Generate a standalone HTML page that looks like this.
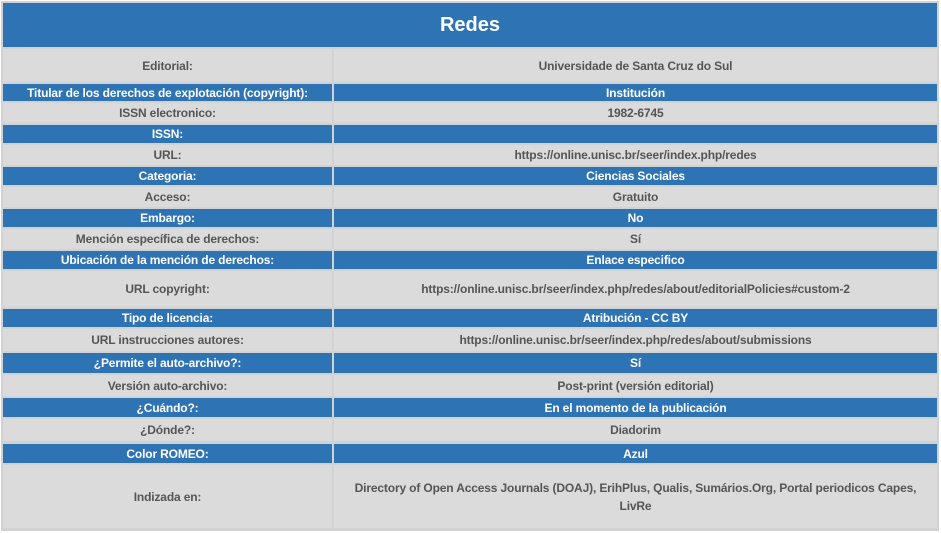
<!DOCTYPE html>
<html><head><meta charset="utf-8"><style>
body{margin:0;width:941px;height:533px;background:#fff;position:relative;font-family:"Liberation Sans",Arial,sans-serif;overflow:hidden}
#t{position:absolute;left:1px;top:1px;width:938px;height:530px;background:#d2d2d2}
.c{position:absolute;display:flex;align-items:center;justify-content:center;text-align:center;font-size:12px;font-weight:bold;color:#555;background:#dbdbdb;line-height:18px;letter-spacing:-0.15px}
.b{background:#2e74b5;color:#fff}
.l{left:3px;width:329px}
.r{left:334px;width:603px}
</style></head><body>
<div id="t"></div>
<div class="c b" style="left:3px;top:3px;width:934px;height:44px;font-size:20px;letter-spacing:0">Redes</div>
<div id="rows"></div>
<script>
var R=[
["Editorial:","Universidade de Santa Cruz do Sul",49,82,0],
["Titular de los derechos de explotación (copyright):","Institución",84,101,1],
["ISSN electronico:","1982-6745",103,123,0],
["ISSN:","",125,143,1],
["URL:","https://online.unisc.br/seer/index.php/redes",145,165,0],
["Categoria:","Ciencias Sociales",167,185,1],
["Acceso:","Gratuito",187,207,0],
["Embargo:","No",209,227,1],
["Mención específica de derechos:","Sí",229,249,0],
["Ubicación de la mención de derechos:","Enlace especifico",251,269,1],
["URL copyright:","https://online.unisc.br/seer/index.php/redes/about/editorialPolicies#custom-2",271,307,0],
["Tipo de licencia:","Atribución - CC BY",309,327,1],
["URL instrucciones autores:","https://online.unisc.br/seer/index.php/redes/about/submissions",329,351,0],
["¿Permite el auto-archivo?:","Sí",353,373,1],
["Versión auto-archivo:","Post-print (versión editorial)",375,396,0],
["¿Cuándo?:","En el momento de la publicación",398,417,1],
["¿Dónde?:","Diadorim",419,441,0],
["Color ROMEO:","Azul",444,463,1],
["Indizada en:","Directory of Open Access Journals (DOAJ), ErihPlus, Qualis, Sumários.Org, Portal periodicos Capes, LivRe",465,528,0]
];
var h="";
R.forEach(function(r){var cls=r[4]?"c b":"c";var st="top:"+r[2]+"px;height:"+(r[3]-r[2])+"px";
h+='<div class="'+cls+' l" style="'+st+'">'+r[0]+'</div><div class="'+cls+' r" style="'+st+';padding:0 4px;box-sizing:border-box">'+r[1]+'</div>';});
document.getElementById("rows").outerHTML=h;
</script>
</body></html>
